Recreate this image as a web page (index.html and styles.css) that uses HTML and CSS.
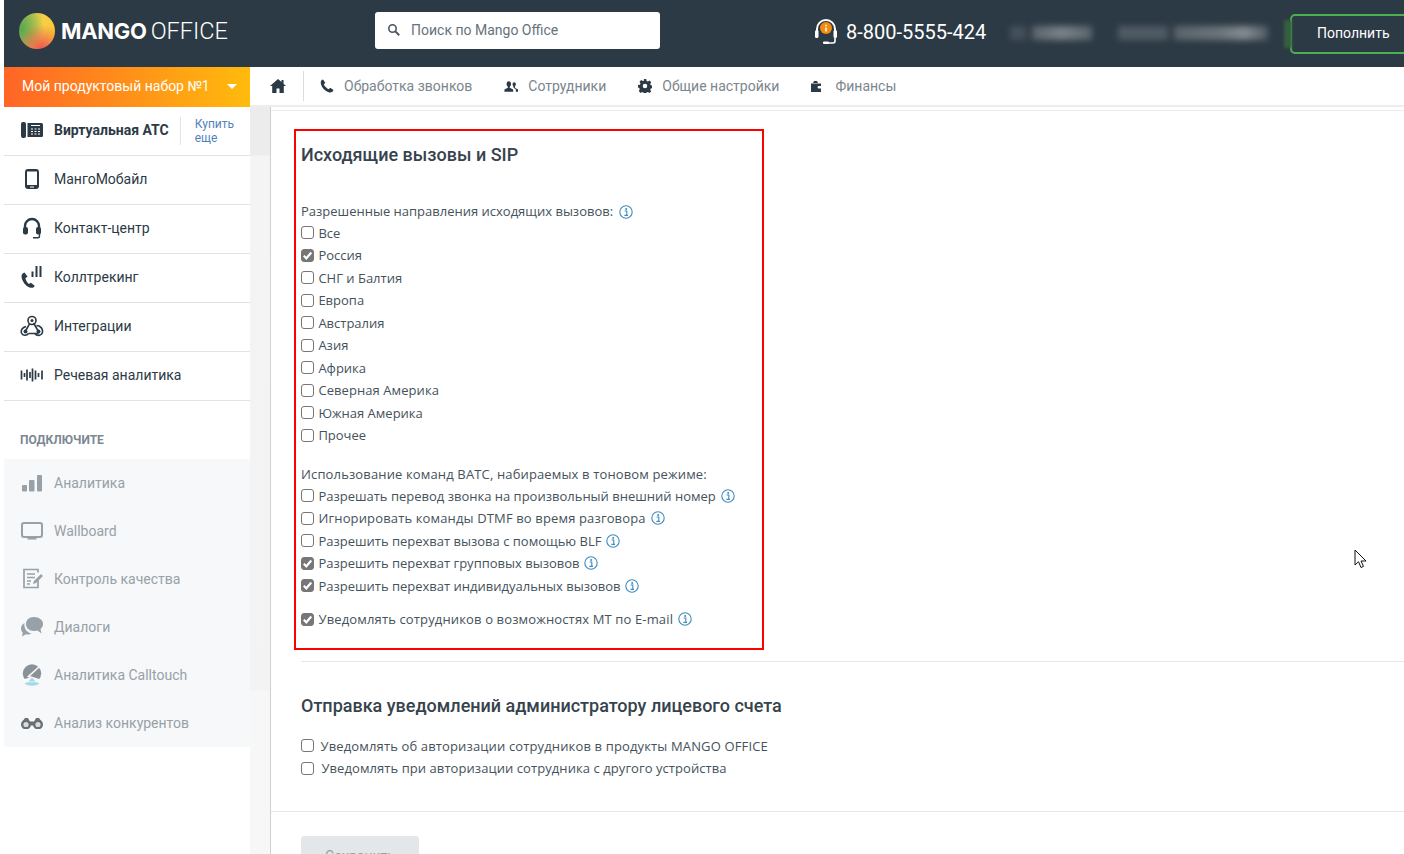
FILE: index.html
```html
<!DOCTYPE html>
<html lang="ru">
<head>
<meta charset="utf-8">
<title>Mango Office</title>
<link rel="stylesheet" href="styles.css">
</head>
<body>
<svg class="defs" width="0" height="0" aria-hidden="true">
  <symbol id="info" viewBox="0 0 14 14">
    <circle cx="7" cy="7" r="6.2" fill="none" stroke="#3f8bbd" stroke-width="1.1"/>
    <circle cx="7.2" cy="3.9" r="1" fill="#3f8bbd"/>
    <path d="M5.6 6h2.2v4.2h1M5.4 10.4h3.6" fill="none" stroke="#3f8bbd" stroke-width="1.1"/>
  </symbol>
</svg>
<div class="app">
  <header class="topbar">
    <div class="logo">
      <span class="logo-ball"></span>
      <span class="logo-text"><b>MANGO</b><span class="logo-light">OFFICE</span></span>
    </div>
    <div class="search">
      <svg width="14" height="14" viewBox="0 0 14 14"><circle cx="5.5" cy="5.5" r="3.7" fill="none" stroke="#4a5661" stroke-width="1.6"/><path d="M8.4 8.4l3.8 3.8" stroke="#4a5661" stroke-width="2"/></svg>
      <span>Поиск по Mango Office</span>
    </div>
    <div class="hotline">
      <svg width="24" height="28" viewBox="0 0 24 28"><path d="M3 15V11a9 9 0 0 1 18 0v4" fill="none" stroke="#fff" stroke-width="2"/><rect x="1" y="12" width="3.5" height="8" rx="1.5" fill="#fff"/><rect x="19.5" y="12" width="3.5" height="8" rx="1.5" fill="#fff"/><path d="M21 20v3a2 2 0 0 1-2 2h-5" fill="none" stroke="#fff" stroke-width="1.6"/><rect x="9" y="23.5" width="6" height="2.6" rx="1" fill="#fff"/><circle cx="12" cy="10" r="6" fill="#f28c0f"/><path d="M12 6.8v1.4M12 9.4v4" stroke="#fff" stroke-width="1.5"/></svg>
      <span>8-800-5555-424</span>
    </div>
    <div class="blurred">
      <i class="b1"></i><i class="b2"></i><i class="b3"></i><i class="b4"></i>
    </div>
    <div class="topup">Пополнить</div>
  </header>
  <div class="workspace">
    <aside class="sidebar">
      <div class="product">
        <span>Мой продуктовый набор №1</span>
        <i class="caret"></i>
      </div>
      <nav class="products">
        <div class="prow active">
          <svg class="ic" width="24" height="18" viewBox="0 0 24 18"><rect x="1" y="1" width="5" height="16" rx="2" fill="#2c3a45"/><path d="M7.5 2h14a1.5 1.5 0 0 1 1.5 1.5v11a1.5 1.5 0 0 1-1.5 1.5h-14z" fill="#2c3a45"/><path d="M11 4.500h9M11 8h2M14.500 8h2M18 8h2M11 10.500h2M14.500 10.500h2M18 10.500h2M11 13h2M14.500 13h2M18 13h2" stroke="#fff" stroke-width="1.200"/></svg>
          <b>Виртуальная АТС</b>
          <a class="buy">Купить<br>еще</a>
        </div>
        <div class="prow">
          <svg class="ic" width="24" height="20" viewBox="0 0 24 20"><rect x="5" y="0" width="14" height="20" rx="3" fill="#2c3a45"/><rect x="7" y="2.500" width="10" height="13.500" fill="#fff"/><path d="M10 18h4" stroke="#fff" stroke-width="1"/></svg>
          <span>МангоМобайл</span>
        </div>
        <div class="prow">
          <svg class="ic" width="24" height="22" viewBox="0 0 24 22"><path d="M5 12V9a7 7 0 0 1 14 0v3" fill="none" stroke="#2c3a45" stroke-width="2.400"/><rect x="3" y="10" width="5" height="7.500" rx="2" fill="#2c3a45"/><rect x="16" y="10" width="5" height="7.500" rx="2" fill="#2c3a45"/><path d="M19.500 17v2a1.800 1.800 0 0 1-1.800 1.800H13" fill="none" stroke="#2c3a45" stroke-width="1.400"/></svg>
          <span>Контакт-центр</span>
        </div>
        <div class="prow">
          <svg class="ic" width="24" height="22" viewBox="0 0 24 22"><path d="M4.500 6.500C1.500 7.500 1 10 2.200 13.500c1.500 4 4.500 7.500 9 8.300 2 .2 3-.7 3.500-2l-3.800-3-2 1.200c-2-1.600-3-3.600-3.500-6l2.200-1.200z" fill="#2c3a45"/><path d="M12.500 5.500v5.500M16.500 0v11M20.500 0v11" stroke="#2c3a45" stroke-width="2"/></svg>
          <span>Коллтрекинг</span>
        </div>
        <div class="prow">
          <svg class="ic" width="24" height="22" viewBox="0 0 24 22"><g fill="none" stroke="#2c3a45" stroke-width="1.600"><circle cx="12" cy="5.500" r="4"/><path d="M9.500 8.800L5.500 16M6 11.500C2.500 12.500.5 15 1.500 18c1 2.500 5 3.400 7 .5M5.500 16.500M8.500 18.500h10M13.500 8l5 8.500M16.500 10.500c4 0 6.500 3.500 6 6.500-.5 3.500-5 4.500-7.500 2"/></g><circle cx="12" cy="5.500" r="1.500" fill="#2c3a45"/><circle cx="5.500" cy="16.500" r="2" fill="#2c3a45"/><circle cx="18.500" cy="16.500" r="2" fill="#2c3a45"/></svg>
          <span>Интеграции</span>
        </div>
        <div class="prow">
          <svg class="ic" width="24" height="14" viewBox="0 0 24 14"><path d="M1.500 2.500v9M4.500 5v4M7 1.500v11M10 4v6M12.500 .5v13M15.500 2.500v9M18.500 5v4M22 2.500v9" stroke="#2c3a45" stroke-width="1.700"/></svg>
          <span>Речевая аналитика</span>
        </div>
      </nav>
      <div class="connect-title">ПОДКЛЮЧИТЕ</div>
      <nav class="upsell">
        <div class="urow">
          <svg class="ic" width="24" height="18" viewBox="0 0 24 18"><rect x="2" y="11" width="5" height="6.500" rx="1" fill="#98a1a7"/><rect x="9" y="6" width="5.500" height="11.500" rx="1" fill="#98a1a7"/><rect x="17" y="1" width="5" height="16.500" rx="1" fill="#98a1a7"/></svg>
          <span>Аналитика</span>
        </div>
        <div class="urow">
          <svg class="ic" width="24" height="18" viewBox="0 0 24 18"><rect x="2" y="1" width="20" height="14" rx="2" fill="none" stroke="#98a1a7" stroke-width="2"/><path d="M7.500 16.500h9" stroke="#98a1a7" stroke-width="2"/></svg>
          <span>Wallboard</span>
        </div>
        <div class="urow">
          <svg class="ic" width="24" height="22" viewBox="0 0 24 22"><path d="M18 11v8.500H4V1.500h14v3" fill="none" stroke="#98a1a7" stroke-width="1.700"/><path d="M7 6h8M7 9.500h8M7 13h4M7 16h3" stroke="#98a1a7" stroke-width="1.500"/><path d="M13 16l1-3 7-7 2 2-7 7z" fill="#98a1a7"/></svg>
          <span>Контроль качества</span>
        </div>
        <div class="urow">
          <svg class="ic" width="24" height="22" viewBox="0 0 24 22"><path d="M14 1c-5 0-8 3-8 7 0 4 3 7 8 7 1.500 0 2.500-.2 3.500-.5l4 3-1-4.500c2-1.500 2.500-3.500 2.500-5.500C23 4 19 1 14 1z" fill="#98a1a7"/><path d="M4.500 7C2.500 8 1 10 1 12.500c0 1.700.7 3 1.700 4.200L2 20.500l3.800-2.300c1.800.5 4 .3 5.700-.7C7 17 3.500 12 4.500 7z" fill="#98a1a7"/></svg>
          <span>Диалоги</span>
        </div>
        <div class="urow">
          <svg class="ic" width="24" height="22" viewBox="0 0 24 22"><circle cx="12" cy="9.500" r="9.200" fill="#8b9297"/><path d="M20 2L8.500 12.500 21.500 16.500" fill="none" stroke="#f6f8fa" stroke-width="1.600"/><path d="M3.500 15.500l8.500-3 8 4.500-2 4c-3 1.500-8 1.500-11.500 0z" fill="#f6f8fa"/><path d="M4.500 19.500c4 3 11 3 15 0l-3-1.200h-9z" fill="#a3d9e8"/><path d="M12 13.500l3.500 4h-7z" fill="#a3d9e8"/></svg>
          <span>Аналитика Calltouch</span>
        </div>
        <div class="urow">
          <svg class="ic" width="24" height="12" viewBox="0 0 24 12"><circle cx="6" cy="7.500" r="3.800" fill="#d9dcde" stroke="#6b6f72" stroke-width="2.400"/><circle cx="18" cy="7.500" r="3.800" fill="#d9dcde" stroke="#6b6f72" stroke-width="2.400"/><path d="M2.500 4.500l2.500-3.500h3l1.500 3h5l1.500-3h3l2.500 3.500z" fill="#6b6f72"/><path d="M9.500 5h5v3.500h-5z" fill="#6b6f72"/></svg>
          <span>Анализ конкурентов</span>
        </div>
      </nav>
    </aside>
    <div class="rightside">
      <nav class="menu">
        <svg class="home" width="16" height="14" viewBox="0 0 16 14"><path d="M8 0L0 7h2.200v7h4.300V9.500h3V14h4.300V7H16l-2.500-2.200V1h-2v2z" fill="#2c3a45"/></svg>
        <i class="menu-sep"></i>
        <div class="mitem">
          <svg width="14" height="14" viewBox="0 0 14 14"><path d="M3 .5C1 1 .5 2.500.8 4.500 1.500 8.500 5.500 12.800 9.500 13.400c2 .3 3.500-.4 4-2.300L10.300 8.800 8.700 10.300C6.800 9.300 4.800 7.300 3.800 5.400L5.300 3.800z" fill="#2c3a45"/></svg>
          <span>Обработка звонков</span>
        </div>
        <div class="mitem">
          <svg width="14" height="11" viewBox="0 0 16 12"><path d="M5.500 0C3.800 0 3 1.300 3 3c0 1.500.6 2.600 1.400 3.300v1.200L.5 9.500V12h10V9.500L6.600 7.500V6.300C7.400 5.600 8 4.500 8 3c0-1.700-.8-3-2.500-3z" fill="#2c3a45"/><path d="M11.500 1C10.500 1 9.800 2 9.800 3.200c0 1.300.5 2.200 1 2.800v1.500l2.700 1.500V12H16V9.500l-3.500-2V6c.5-.6 1-1.500 1-2.800C13.500 2 12.800 1 11.500 1z" fill="#2c3a45"/></svg>
          <span>Сотрудники</span>
        </div>
        <div class="mitem">
          <svg width="14" height="14" viewBox="0 0 14 14"><path fill-rule="evenodd" d="M5.800 0h2.400l.4 1.900 1.300.6 1.700-1 1.600 1.700-1 1.600.6 1.400 1.900.4v2.400l-1.900.4-.6 1.300 1 1.700-1.700 1.600-1.600-1-1.400.6-.4 1.900H5.800l-.4-1.900-1.300-.6-1.700 1L.8 11.900l1-1.600-.6-1.400L0 8.500V6.100l1.900-.4.6-1.300-1-1.700L3.200 1l1.600 1 1.400-.6zM7 4.700a2.300 2.300 0 1 0 0 4.600 2.300 2.300 0 0 0 0-4.600z" fill="#2c3a45"/></svg>
          <span>Общие настройки</span>
        </div>
        <div class="mitem wallet">
          <svg width="10" height="11" viewBox="0 0 10 11"><path d="M3 0h3l1 2H2z" fill="#2c3a45"/><path fill-rule="evenodd" d="M0 2.500h10v2.500H7.500a1.300 1.300 0 0 0 0 2.500H10V11H0z" fill="#2c3a45"/></svg>
          <span>Финансы</span>
        </div>
      </nav>
      <div class="contentwrap">
        <div class="gutter"></div>
        <main class="content">
          <div class="pad">
            <section class="redbox">
              <h2>Исходящие вызовы и SIP</h2>
              <div class="group-title">Разрешенные направления исходящих вызовов: <svg class="inf"><use href="#info"/></svg></div>
              <label class="chk"><input type="checkbox"> Все</label>
              <label class="chk"><input type="checkbox" checked> Россия</label>
              <label class="chk"><input type="checkbox"> СНГ и Балтия</label>
              <label class="chk"><input type="checkbox"> Европа</label>
              <label class="chk"><input type="checkbox"> Австралия</label>
              <label class="chk"><input type="checkbox"> Азия</label>
              <label class="chk"><input type="checkbox"> Африка</label>
              <label class="chk sp1"><input type="checkbox"> Северная Америка</label>
              <label class="chk"><input type="checkbox"> Южная Америка</label>
              <label class="chk"><input type="checkbox"> Прочее</label>
              <div class="group-title second sp2">Использование команд ВАТС, набираемых в тоновом режиме:</div>
              <label class="chk"><input type="checkbox"> Разрешать перевод звонка на произвольный внешний номер <svg class="inf"><use href="#info"/></svg></label>
              <label class="chk sp2"><input type="checkbox"> Игнорировать команды DTMF во время разговора <svg class="inf"><use href="#info"/></svg></label>
              <label class="chk"><input type="checkbox"> Разрешить перехват вызова с помощью BLF <svg class="inf"><use href="#info"/></svg></label>
              <label class="chk"><input type="checkbox" checked> Разрешить перехват групповых вызовов <svg class="inf"><use href="#info"/></svg></label>
              <label class="chk"><input type="checkbox" checked> Разрешить перехват индивидуальных вызовов <svg class="inf"><use href="#info"/></svg></label>
              <label class="chk notify sp2"><input type="checkbox" checked> Уведомлять сотрудников о возможностях МТ по E-mail <svg class="inf"><use href="#info"/></svg></label>
            </section>
            <hr class="rule">
            <section class="admin">
              <h2>Отправка уведомлений администратору лицевого счета</h2>
              <label class="chk wide sp2"><input type="checkbox"> Уведомлять об авторизации сотрудников в продукты MANGO OFFICE</label>
              <label class="chk wider sp1"><input type="checkbox"> Уведомлять при авторизации сотрудника с другого устройства</label>
            </section>
          </div>
          <hr class="rule full">
          <div class="pad">
            <button class="save" type="button">Сохранить</button>
          </div>
        </main>
      </div>
    </div>
  </div>
</div>
<svg class="cursor" width="14" height="20" viewBox="0 0 14 20"><path d="M1 1v15l3.500-3.300L7 18.500l2.500-1.100-2.500-5.400h5z" fill="#fff" stroke="#111" stroke-width="1"/></svg>
</body>
</html>
```

FILE: styles.css
```css
* { box-sizing: border-box; }
html, body { margin: 0; height: 100%; overflow: hidden; background: #fff; }
body { font-family: Roboto, "Liberation Sans", sans-serif; color: #2c3a45; }
.defs { position: absolute; }
.app { height: 854px; padding-left: 4px; display: flex; flex-direction: column; }

.topbar { height: 67px; background: #2c3a45; display: flex; align-items: center; flex: none; position: relative; overflow: hidden; }
.logo { display: flex; align-items: center; width: 371px; padding-left: 15px; padding-bottom: 5px; }
.logo-ball { width: 36px; height: 36px; border-radius: 50%; flex: none; background:
  radial-gradient(circle at 62% 100%, #ee5350 0, rgba(238,83,80,0) 58%),
  radial-gradient(circle at 0% 45%, #55a84f 0, rgba(85,168,79,0) 62%),
  linear-gradient(100deg, #8db552, #f6d048 60%, #fdc52d); }
.logo-text { margin-left: 6px; color: #fff; font-family: Inter, Roboto, sans-serif; font-size: 22px; white-space: nowrap; letter-spacing: -.3px; display: flex; align-items: baseline; }
.logo-text b { font-weight: 700; }
.logo-light { font-family: Roboto, sans-serif; font-weight: 300; font-size: 23.5px; margin-left: 4px; letter-spacing: 0; }
.search { width: 285px; height: 37px; margin-bottom: 6px; background: #fff; border-radius: 3px; display: flex; align-items: center; padding: 0 0 1px 12px; gap: 10px; font-size: 14px; color: #66727c; flex: none; }
.hotline { display: flex; align-items: center; gap: 8px; margin-left: 154px; margin-bottom: 4px; color: #fff; font-size: 20px; flex: none; white-space: nowrap; }
.blurred { width: 270px; margin-left: 24px; height: 20px; display: flex; gap: 6px; filter: blur(3px); flex: none; }
.blurred i { display: block; height: 14px; margin-top: 2px; background: #5e6870; }
.b1 { width: 16px; opacity: .5; }
.b2 { width: 60px; background: linear-gradient(90deg, #59636b, #7a8288 50%, #59636b) !important; }
.b3 { width: 50px; margin-left: 20px; opacity: .7; }
.b4 { width: 94px; background: linear-gradient(90deg, #59636b, #6d757b 50%, #858c91 75%, #4f5a63) !important; }
.topup { position: absolute; left: 1286px; top: 14px; width: 140px; height: 40px; border: 2px solid #4caf50; border-radius: 5px; color: #fff; font-size: 14px; line-height: 34px; padding-left: 25px; }
.topup::before { content: ""; position: absolute; left: -8px; top: 4px; width: 8px; height: 28px; background: #35603f; filter: blur(1.5px); }

.workspace { flex: 1; display: flex; min-height: 0; }
.sidebar { width: 246px; flex: none; background: #fff; }
.product { height: 40px; background: linear-gradient(90deg, #ff6526, #ffbb0c); color: #fff; font-size: 14px; display: flex; align-items: center; justify-content: space-between; padding: 0 13px 2px 18px; }
.caret { width: 0; height: 0; border: 5px solid transparent; border-top-color: #fff; border-bottom: 0; }
.prow { height: 49px; border-bottom: 1px solid #e3e3e3; display: flex; align-items: center; padding: 0 0 3px 16px; font-size: 14px; }
.ic { flex: none; margin-right: 10px; }
.prow b { font-weight: 700; }
.active b { white-space: nowrap; }
.buy { margin: 2px 0 0 11px; border-left: 1px solid #e3e3e3; padding-left: 14px; font-size: 12px; line-height: 14px; color: #4f82bd; }
.connect-title { font-size: 12px; font-weight: 700; color: #7b8792; padding: 32px 0 0 16px; height: 58px; }
.upsell { background: #f6f8fa; }
.urow { height: 48px; display: flex; align-items: center; padding-left: 16px; font-size: 14px; color: #98a1a7; }

.rightside { flex: 1; min-width: 0; display: flex; flex-direction: column; }
.menu { height: 40px; flex: none; background: #fff; border-bottom: 2px solid #ededed; display: flex; align-items: center; padding-left: 20px; font-size: 14px; color: #7c858c; }
.home { margin-right: 17px; flex: none; }
.menu-sep { width: 1px; height: 30px; background: #dcdcdc; margin-right: 16px; }
.mitem { display: flex; align-items: center; gap: 10px; margin-right: 32px; }
.mitem svg { flex: none; }
.wallet { gap: 14px; }
.contentwrap { flex: 1; display: flex; min-height: 0; }
.gutter { width: 20px; flex: none; background: linear-gradient(180deg, #ececec 0, #ececec 48px, #f4f4f4 49px, #f3f3f3 583px, #f7f7f7 584px); }
.content { flex: 1; min-width: 0; border-left: 1px solid #cfcfcf; padding-top: 22px; background: #fff; position: relative; font-family: "Open Sans", sans-serif; font-size: 13px; color: #45525c; }
.content::before { content: ""; position: absolute; left: 0; right: 0; top: 3px; height: 1px; background: #ececec; }
.pad { padding-left: 23px; }
.redbox { width: 470px; height: 521px; border: 2px solid #f00; padding: 13px 5px 0; }
h2 { margin: 0; font-family: Roboto, sans-serif; font-size: 18px; font-weight: 500; line-height: 22px; color: #36434d; }
.redbox h2 { margin-bottom: 36px; }
.group-title { height: 20px; line-height: 18px; white-space: nowrap; }
.group-title.second { margin-top: 18px; }
.chk { display: flex; align-items: center; height: 22.5px; padding-bottom: 1px; white-space: pre; }
.sp1 { letter-spacing: .07px; }
.sp2 { letter-spacing: .14px; }
.chk input { appearance: none; width: 13px; height: 13px; margin: 0 1px 0 0; border: 1px solid #767676; border-radius: 3px; background: #fff; flex: none; }
.chk input:checked { border-color: #777; background: #777 url("data:image/svg+xml,%3Csvg xmlns='http://www.w3.org/2000/svg' width='11' height='11' viewBox='0 0 11 11'%3E%3Cpath d='M1.800 5.800L4.300 8.300 9.300 2.600' fill='none' stroke='%23fff' stroke-width='2.200'/%3E%3C/svg%3E") center / 11px 11px no-repeat; }
.inf { width: 14px; height: 14px; margin-left: 1.5px; flex: none; }
.group-title .inf { vertical-align: -3px; margin-left: 2px; }
.notify { margin-top: 11px; }
.rule { border: 0; height: 1px; background: #e6e6e6; margin: 11px 0 0 7px; }
.rule.full { margin: 31px 0 0; }
.admin { padding: 33px 0 0 7px; }
.admin h2 { margin-bottom: 18px; }
.wide input { margin-right: 3px; }
.wider input { margin-right: 4px; }
.save { display: block; width: 118px; height: 40px; margin: 24px 0 0 7px; border: 0; border-radius: 3px; background: #e4e7ea; color: #95a0a8; font-family: Roboto, sans-serif; font-size: 14px; }
.cursor { position: absolute; left: 1354px; top: 549px; }
```
